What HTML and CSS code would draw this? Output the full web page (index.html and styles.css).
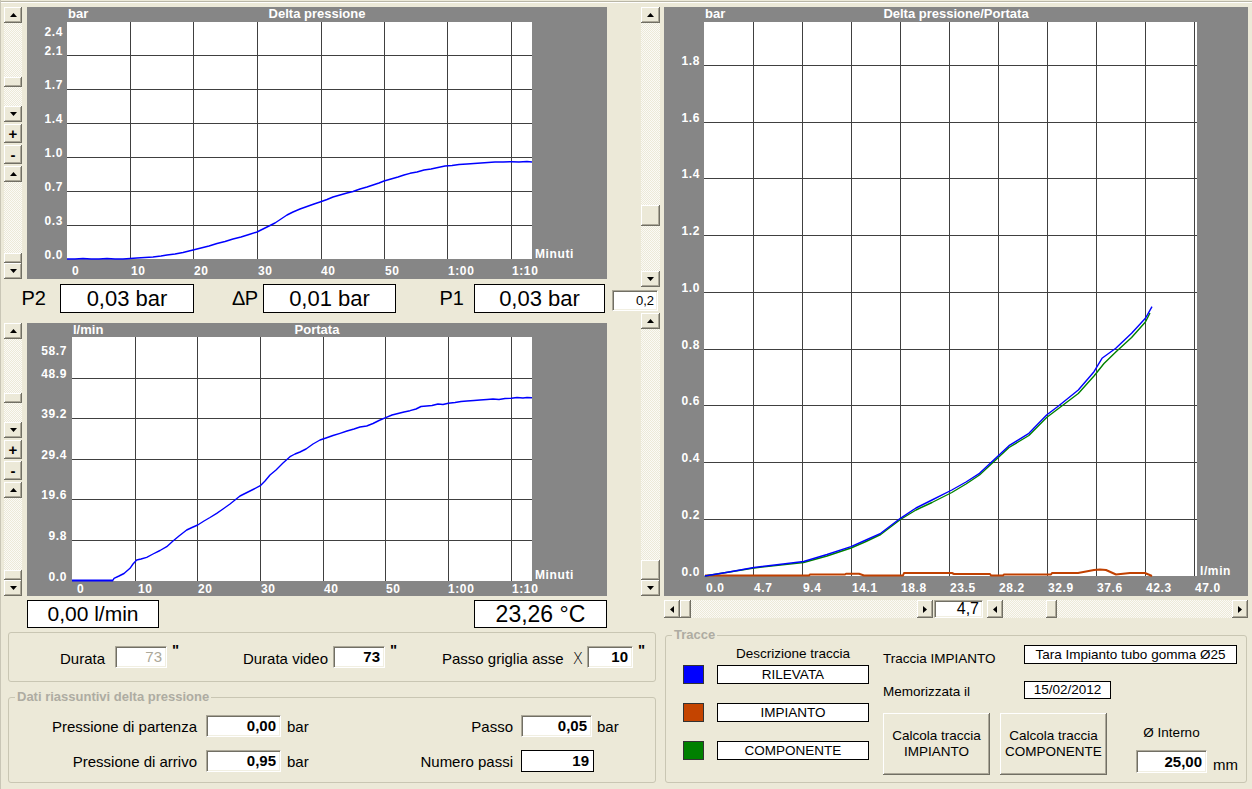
FILE: index.html
```html
<!DOCTYPE html>
<html>
<head>
<meta charset="utf-8">
<title>Delta pressione</title>
<link rel="stylesheet" href="styles.css">
</head>
<body>
<div class="app">
  <div class="top">
    <div class="left">
      <div class="crow c1">
        <div class="zcol">
          <div class="vsb sa">
            <div class="sbtn"><svg class="arr" width="7" height="4"><polygon points="0,4 7,4 3.5,0"/></svg></div>
            <div class="track"><div class="thumb ta"></div></div>
            <div class="sbtn"><svg class="arr" width="7" height="4"><polygon points="0,0 7,0 3.5,4"/></svg></div>
          </div>
          <div class="pm">+</div>
          <div class="pm">-</div>
          <div class="vsb sb">
            <div class="sbtn"><svg class="arr" width="7" height="4"><polygon points="0,4 7,4 3.5,0"/></svg></div>
            <div class="track"><div class="thumb tend"></div></div>
            <div class="sbtn"><svg class="arr" width="7" height="4"><polygon points="0,0 7,0 3.5,4"/></svg></div>
          </div>
        </div>
        <svg class="chart" width="580" height="272" viewBox="0 0 580 272">
          <rect class="cbg" width="580" height="272"/>
          <rect class="plot" x="40" y="15" width="465" height="237"/>
          <path class="grid" d="M103.5 15V252M166.5 15V252M230.5 15V252M294.5 15V252M357.5 15V252M420.5 15V252M484.5 15V252M40 48.5H505M40 82.5H505M40 116.5H505M40 150.5H505M40 184.5H505M40 218.5H505"/>
          <text class="ct" x="41" y="11">bar</text>
          <text class="ct mid" x="290" y="11">Delta pressione</text>
          <g class="ax end">
            <text x="36" y="29">2.4</text>
            <text x="36" y="48">2.1</text>
            <text x="36" y="82">1.7</text>
            <text x="36" y="116">1.4</text>
            <text x="36" y="150">1.0</text>
            <text x="36" y="184">0.7</text>
            <text x="36" y="218">0.3</text>
            <text x="36" y="252">0.0</text>
          </g>
          <g class="ax">
            <text x="45" y="268">0</text>
            <text x="104" y="268">10</text>
            <text x="167" y="268">20</text>
            <text x="231" y="268">30</text>
            <text x="294" y="268">40</text>
            <text x="358" y="268">50</text>
            <text x="421" y="268">1:00</text>
            <text x="485" y="268">1:10</text>
            <text x="508" y="251">Minuti</text>
          </g>
          <polyline class="lb" points="40,252 48,252 56,251.5 64,252 72,252 80,251.5 88,252 96,252 103,251.5 110,251 118,250.5 126,250 134,249 140,248 148,247 156,245.5 166,243 174,241 182,239 190,236.5 198,234.5 206,232 214,230 222,227.5 230,225 236,222 242,219 248,216 254,212 260,208 266,205 273,202 280,199.5 287,197 293,195 300,192.5 306,190 313,188 320,186 326,184.5 333,182 340,180 346,178 352,176 357,174 364,172 371,170 377,168 383,166.3 390,165 397,163 404,162 411,160.5 418,159 425,158.5 432,157.5 440,157 447,156.5 454,156 461,155.5 468,155 476,155 484,154.7 492,155 500,154.5 505,155"/>
        </svg>
      </div>

      <div class="readings">
        <span class="rl rl1">P2</span>
        <div class="vbox w134">0,03 bar</div>
        <span class="rl rl2">∆P</span>
        <div class="vbox w133">0,01 bar</div>
        <span class="rl rl3">P1</span>
        <div class="vbox w131">0,03 bar</div>
      </div>

      <div class="crow c2">
        <div class="zcol">
          <div class="vsb sa">
            <div class="sbtn"><svg class="arr" width="7" height="4"><polygon points="0,4 7,4 3.5,0"/></svg></div>
            <div class="track"><div class="thumb ta"></div></div>
            <div class="sbtn"><svg class="arr" width="7" height="4"><polygon points="0,0 7,0 3.5,4"/></svg></div>
          </div>
          <div class="pm">+</div>
          <div class="pm">-</div>
          <div class="vsb sb">
            <div class="sbtn"><svg class="arr" width="7" height="4"><polygon points="0,4 7,4 3.5,0"/></svg></div>
            <div class="track"><div class="thumb tend"></div></div>
            <div class="sbtn"><svg class="arr" width="7" height="4"><polygon points="0,0 7,0 3.5,4"/></svg></div>
          </div>
        </div>
        <svg class="chart" width="580" height="273" viewBox="0 0 580 273">
          <rect class="cbg" width="580" height="273"/>
          <rect class="plot" x="45" y="14" width="460" height="244"/>
          <path class="grid" d="M108.5 14V258M170.5 14V258M233.5 14V258M296.5 14V258M358.5 14V258M421.5 14V258M484.5 14V258M45 55.5H505M45 95.5H505M45 136.5H505M45 176.5H505M45 217.5H505"/>
          <text class="ct" x="46" y="11">l/min</text>
          <text class="ct mid" x="290" y="11">Portata</text>
          <g class="ax end">
            <text x="40" y="32">58.7</text>
            <text x="40" y="55">48.9</text>
            <text x="40" y="95">39.2</text>
            <text x="40" y="136">29.4</text>
            <text x="40" y="176">19.6</text>
            <text x="40" y="217">9.8</text>
            <text x="40" y="258">0.0</text>
          </g>
          <g class="ax">
            <text x="50" y="270">0</text>
            <text x="111" y="270">10</text>
            <text x="171" y="270">20</text>
            <text x="234" y="270">30</text>
            <text x="297" y="270">40</text>
            <text x="359" y="270">50</text>
            <text x="421" y="270">1:00</text>
            <text x="485" y="270">1:10</text>
            <text x="508" y="256">Minuti</text>
          </g>
          <polyline class="lb thick" points="45,257.5 86,257.5"/>
          <polyline class="lb" points="86,257.5 87,255.3 92,253 97,250.5 103,245.3 106,241 109.7,237 114,236 119.7,234.3 126,231 133,227.5 139.7,223.7 146,218 152,213 159.7,207 165,204.5 170.7,202 177,198 183,194.5 189.7,190.3 196,186 203,181 208,177 213,173 219,170 226,166.5 233.3,162.7 238,158 243,152 249,147 256,140 263,133.7 268,131 273,129 279,126 286,121 293,117 299,115 306,112.5 313,110.3 320,108 327,106 333,104 339.7,103 346,100.5 352,97.5 358.7,94.7 365,92 371,90.5 377,89 383,87.7 389,86 394,83.5 399.7,83 405,82.5 411,81 416,81.5 421.3,80.3 428,79.5 434,78.5 440,78 447,77.5 453,77 460,76.5 466,76 472,76.5 478,75.5 484.3,75.3 490,74.5 496,75 500,74.5 505,74.7"/>
        </svg>
      </div>

      <div class="readings2">
        <div class="vbox w132">0,00 l/min</div>
        <div class="vbox w133 temp">23,26 °C</div>
      </div>
    </div>

    <div class="right">
      <div class="rmain">
        <div class="vcol">
          <div class="vsb s1">
            <div class="sbtn"><svg class="arr" width="7" height="4"><polygon points="0,4 7,4 3.5,0"/></svg></div>
            <div class="track"><div class="thumb tr1"></div></div>
            <div class="sbtn"><svg class="arr" width="7" height="4"><polygon points="0,0 7,0 3.5,4"/></svg></div>
          </div>
          <div class="edit small">0,2</div>
          <div class="vsb s2">
            <div class="sbtn"><svg class="arr" width="7" height="4"><polygon points="0,4 7,4 3.5,0"/></svg></div>
            <div class="track"><div class="thumb tend tr2"></div></div>
            <div class="sbtn"><svg class="arr" width="7" height="4"><polygon points="0,0 7,0 3.5,4"/></svg></div>
          </div>
        </div>
        <svg class="chart" width="584" height="589" viewBox="0 0 584 589">
          <rect class="cbg" width="584" height="589"/>
          <rect class="plot" x="40" y="15" width="493" height="554"/>
          <path class="grid" d="M89.5 15V569M138.5 15V569M187.5 15V569M236.5 15V569M285.5 15V569M334.5 15V569M383.5 15V569M432.5 15V569M481.5 15V569M530.5 15V569M40 58.5H533M40 115.5H533M40 171.5H533M40 228.5H533M40 285.5H533M40 342.5H533M40 398.5H533M40 455.5H533M40 512.5H533"/>
          <text class="ct" x="41" y="11">bar</text>
          <text class="ct mid" x="292" y="11">Delta pressione/Portata</text>
          <g class="ax end">
            <text x="36" y="58">1.8</text>
            <text x="36" y="115">1.6</text>
            <text x="36" y="171">1.4</text>
            <text x="36" y="228">1.2</text>
            <text x="36" y="285">1.0</text>
            <text x="36" y="342">0.8</text>
            <text x="36" y="398">0.6</text>
            <text x="36" y="455">0.4</text>
            <text x="36" y="512">0.2</text>
            <text x="36" y="569">0.0</text>
          </g>
          <g class="ax">
            <text x="42" y="585">0.0</text>
            <text x="90" y="585">4.7</text>
            <text x="139" y="585">9.4</text>
            <text x="188" y="585">14.1</text>
            <text x="237" y="585">18.8</text>
            <text x="286" y="585">23.5</text>
            <text x="335" y="585">28.2</text>
            <text x="384" y="585">32.9</text>
            <text x="433" y="585">37.6</text>
            <text x="482" y="585">42.3</text>
            <text x="531" y="585">47.0</text>
            <text x="536" y="568">l/min</text>
          </g>
          <polyline class="lo" points="41,568.5 145,568.5 146,567.5 181,567.5 182,566.8 195,566.8 200,568.5 239,568.5 240,566 288,566 290,567 326,567 327,568.5 339,568.5 340,567.5 387,567.5 388,566 414,566 422,564.5 430,563 436,562.5 442,563 452,567.5 466,566 481,566 488,569"/>
          <polyline class="lg" points="40.8,569 90,561 139.6,555.5 163,549 187,541 202,534.5 216.7,527.5 236.4,512.5 252,503 268,495.5 287.8,485.5 302,477 315.5,468 333.2,451.5 345,440.5 364.9,428.5 382.6,410.5 394.5,401.5 414.3,386.5 430,369 440,356.5 451.8,345 467.6,330.5 481.4,315 486,306"/>
          <polyline class="lb" points="40.8,569 65,565 90,560.5 115,557.5 139.6,554.5 163,547.5 187,539.7 202,533 216.7,526.3 236.4,511.3 252,501 268,493 287.8,483 302,475 315.5,466.3 333.2,449.7 345,438.7 364.9,426.3 382.6,408 394.5,399 414.3,383 430,364.7 438,351.3 451.8,341.3 467.6,326.3 481.4,311.3 488,299.7"/>
        </svg>
      </div>
      <div class="hs">
        <div class="hsb h1">
          <div class="sbtn"><svg class="arr" width="4" height="7"><polygon points="4,0 4,7 0,3.5"/></svg></div>
          <div class="htrack"><div class="hthumb"></div></div>
          <div class="sbtn"><svg class="arr" width="4" height="7"><polygon points="0,0 0,7 4,3.5"/></svg></div>
        </div>
        <div class="edit hval">4,7</div>
        <div class="hsb h2">
          <div class="sbtn"><svg class="arr" width="4" height="7"><polygon points="4,0 4,7 0,3.5"/></svg></div>
          <div class="htrack"><div class="hthumb h2t"></div></div>
          <div class="sbtn"><svg class="arr" width="4" height="7"><polygon points="0,0 0,7 4,3.5"/></svg></div>
        </div>
      </div>
    </div>
  </div>

  <div class="bottom">
    <div class="bleft">
      <div class="grp g1">
        <span class="glbl gl1">Durata</span>
        <div class="edit gbox dis">73</div>
        <span class="q">"</span>
        <span class="glbl gl2">Durata video</span>
        <div class="edit gbox">73</div>
        <span class="q">"</span>
        <span class="glbl gl3">Passo griglia asse<span class="xs">X</span></span>
        <div class="edit gbox w46">10</div>
        <span class="q">"</span>
      </div>
      <fieldset class="grp g2">
        <legend>Dati riassuntivi delta pressione</legend>
        <div class="prow r1">
          <span class="plbl">Pressione di partenza</span>
          <div class="edit pbox">0,00</div>
          <span class="unit">bar</span>
          <span class="plbl2">Passo</span>
          <div class="edit pbox w71">0,05</div>
          <span class="unit2">bar</span>
        </div>
        <div class="prow r2">
          <span class="plbl">Pressione di arrivo</span>
          <div class="edit pbox">0,95</div>
          <span class="unit">bar</span>
          <span class="plbl2">Numero passi</span>
          <div class="nbox">19</div>
        </div>
      </fieldset>
    </div>

    <fieldset class="grp tracce">
      <legend>Tracce</legend>
      <div class="trbody">
        <div class="colA">
          <div class="hdr">Descrizione traccia</div>
          <div class="trow"><span class="sq blue"></span><div class="bbox wdesc">RILEVATA</div></div>
          <div class="trow"><span class="sq orange"></span><div class="bbox wdesc">IMPIANTO</div></div>
          <div class="trow"><span class="sq green"></span><div class="bbox wdesc">COMPONENTE</div></div>
        </div>
        <div class="colB">
          <div class="brow b1"><span class="blbl">Traccia IMPIANTO</span><div class="bbox tara">Tara Impianto tubo gomma Ø25</div></div>
          <div class="brow b2"><span class="blbl">Memorizzata il</span><div class="bbox date">15/02/2012</div></div>
          <div class="brow b3">
            <button class="btn">Calcola traccia<br>IMPIANTO</button>
            <button class="btn">Calcola traccia<br>COMPONENTE</button>
            <div class="interno">
              <div class="ilbl">Ø Interno</div>
              <div class="irow"><div class="edit ibox">25,00</div><span class="mm">mm</span></div>
            </div>
          </div>
        </div>
      </div>
    </fieldset>
  </div>
</div>
</body>
</html>
```

FILE: styles.css
```css
* { box-sizing: border-box; }
html, body { margin: 0; padding: 0; }
body {
  background: #ECE9D8;
  font-family: "Liberation Sans", Arial, sans-serif;
  color: #000;
}
fieldset { margin: 0; padding: 0; min-width: 0; }
.app {
  width: 1252px;
  height: 789px;
  overflow: hidden;
  background:
    linear-gradient(90deg, #c9c6b6 0 1px, transparent 1px),
    linear-gradient(#ECE9D8 0 1px, #b9b6a6 1px 2px, #fff 2px 3px, #ECE9D8 3px);
}

/* ---------- top area ---------- */
.top { height: 628px; padding-top: 7px; display: flex; }
.left { width: 641px; padding-left: 4px; display: flex; flex-direction: column; }
.right { width: 611px; display: flex; flex-direction: column; }

.crow { display: flex; gap: 5px; }
.c1 { height: 272px; }
.c2 { height: 273px; margin-top: 10px; }
.chart { display: block; flex: none; }

.zcol { width: 18px; display: flex; flex-direction: column; gap: 2px; }
.vsb { display: flex; flex-direction: column; width: 18px; }
.zcol .sa { height: 115px; }
.zcol .sb { flex: 1; }

.sbtn {
  flex: none;
  width: 18px;
  height: 16px;
  background: #ECE9D8;
  box-shadow: inset -1px -1px #716f64, inset 1px 1px #fff, inset -2px -2px #aca899;
  display: flex;
  align-items: center;
  justify-content: center;
}
.arr { display: block; fill: #000; }
.track {
  flex: 1;
  display: flex;
  flex-direction: column;
  background: repeating-conic-gradient(#fbfaf6 0 25%, #ECE9D8 0 50%) 0 0 / 2px 2px;
}
.thumb {
  flex: none;
  height: 10px;
  background: #ECE9D8;
  box-shadow: inset -1px -1px #716f64, inset 1px 1px #fff, inset -2px -2px #aca899;
}
.ta { margin-top: 54px; }
.tend { margin-top: auto; }

.pm {
  flex: none;
  width: 18px;
  height: 19px;
  background: #ECE9D8;
  box-shadow: inset -1px -1px #716f64, inset 1px 1px #fff, inset -2px -2px #aca899;
  font: bold 15px/19px "Liberation Sans", Arial, sans-serif;
  text-align: center;
}

/* chart svg */
.cbg { fill: #868686; }
.plot { fill: #fff; }
.grid { stroke: #404040; stroke-width: 1; fill: none; }
.ct { font: bold 13px "Liberation Sans", Arial, sans-serif; fill: #fff; }
.mid { text-anchor: middle; }
.ax text { font: bold 12px "Liberation Sans", Arial, sans-serif; fill: #fff; letter-spacing: 0.6px; }
.ax.end text { text-anchor: end; }
.lb { fill: none; stroke: #0000ff; stroke-width: 1.4; stroke-linejoin: round; }
.lb.thick { stroke-width: 2; }
.lg { fill: none; stroke: #008000; stroke-width: 1.4; stroke-linejoin: round; }
.lo { fill: none; stroke: #c04000; stroke-width: 2; stroke-linejoin: round; }

/* readings */
.readings { display: flex; align-items: center; height: 29px; margin-top: 5px; }
.rl { font-size: 20px; text-align: right; flex: none; }
.rl1 { width: 42px; margin-right: 14px; }
.rl2 { width: 64px; margin-right: 5px; }
.rl3 { width: 68px; margin-right: 10px; }
.vbox {
  flex: none;
  height: 29px;
  background: #fff;
  border: 1px solid #000;
  font-size: 22px;
  line-height: 27px;
  text-align: center;
}
.w134 { width: 134px; }
.w133 { width: 133px; }
.w132 { width: 132px; }
.w131 { width: 131px; }
.readings2 {
  display: flex;
  justify-content: space-between;
  margin-top: 4px;
  height: 28px;
  padding: 0 34px 0 23px;
}
.readings2 .vbox { height: 28px; line-height: 26px; font-size: 21px; }
.readings2 .temp { font-size: 23px; }

/* right */
.rmain { display: flex; gap: 4px; height: 589px; }
.vcol { width: 19px; display: flex; flex-direction: column; }
.vcol .vsb { width: 19px; }
.vcol .sbtn { width: 19px; }
.s1 { height: 280px; }
.s2 { flex: 1; margin-top: 2px; }
.tr1 { margin-top: 182px; height: 21px; }
.tr2 { height: 20px; }

.edit {
  background: #fff;
  border: 1px solid;
  border-color: #aca899 #fff #fff #aca899;
  box-shadow: inset 1px 1px #716f64, inset -1px -1px #f1efe2;
  text-align: right;
  padding-right: 4px;
  font-weight: bold;
}
.small {
  flex: none;
  width: 46px;
  height: 21px;
  margin: 3px 0 0 -29px;
  font: 13px/19px "Liberation Sans", Arial, sans-serif;
  padding-right: 3px;
}

.hs { display: flex; margin-top: 4px; padding-left: 23px; height: 18px; }
.hsb { display: flex; height: 18px; }
.hsb .sbtn { width: 16px; height: 18px; }
.h1 { width: 269px; }
.h2 { width: 261px; margin-left: 4px; }
.htrack {
  flex: 1;
  display: flex;
  background: repeating-conic-gradient(#fbfaf6 0 25%, #ECE9D8 0 50%) 0 0 / 2px 2px;
}
.hthumb {
  flex: none;
  width: 11px;
  height: 18px;
  background: #ECE9D8;
  box-shadow: inset -1px -1px #716f64, inset 1px 1px #fff, inset -2px -2px #aca899;
}
.h2t { margin-left: 43px; }
.hval {
  flex: none;
  width: 49px;
  height: 18px;
  margin-left: 1px;
  font: 16px/16px "Liberation Sans", Arial, sans-serif;
  padding-right: 3px;
}

/* ---------- bottom ---------- */
.bottom { display: flex; align-items: flex-start; }
.bleft { width: 648px; margin-left: 8px; display: flex; flex-direction: column; }
.grp { border: 1px solid #c9c6b3; border-radius: 3px; }
.grp legend {
  padding: 0 2px;
  margin-left: 6px;
  font: bold 13px/14px "Liberation Sans", Arial, sans-serif;
  color: #aeaca2;
}

.g1 {
  margin-top: 4px;
  height: 50px;
  display: flex;
  align-items: center;
  font-size: 15px;
}
.glbl { flex: none; text-align: right; padding-top: 3px; }
.gl1 { width: 96px; margin-right: 10px; }
.gl2 { width: 146px; margin-right: 5px; }
.gl3 { width: 183px; margin-right: 4px; }
.xs { margin-left: 9px; font-family: "DejaVu Sans", sans-serif; font-weight: 200; }
.gbox { flex: none; width: 52px; height: 22px; font-size: 15px; line-height: 20px; }
.gbox.w46 { width: 46px; }
.gbox.dis { color: #aca899; font-weight: normal; }
.q {
  flex: none;
  width: 10px;
  align-self: flex-start;
  margin-top: 10px;
  margin-left: 5px;
  font: bold 15px/14px "Liberation Sans", Arial, sans-serif;
}

.g2 { margin-top: 8px; height: 93px; }
.prow { display: flex; align-items: center; height: 22px; font-size: 15px; }
.prow.r1 { margin-top: 11px; }
.prow.r2 { margin-top: 13px; }
.plbl { flex: none; width: 188px; margin-right: 9px; text-align: right; }
.pbox { flex: none; width: 75px; height: 22px; font-size: 15px; line-height: 20px; }
.pbox.w71 { width: 71px; }
.unit { flex: none; width: 49px; padding-left: 6px; }
.plbl2 { flex: none; width: 183px; margin-right: 8px; text-align: right; }
.unit2 { padding-left: 5px; }
.nbox {
  flex: none;
  width: 73px;
  height: 22px;
  background: #fff;
  border: 1px solid #000;
  text-align: right;
  padding-right: 4px;
  font-weight: bold;
  line-height: 20px;
}

.tracce { margin-left: 9px; width: 582px; height: 155px; }
.trbody { display: flex; font-size: 13.5px; }
.colA { width: 186px; margin-left: 17px; display: flex; flex-direction: column; }
.hdr { margin: 4px 0 0 34px; width: 152px; text-align: center; line-height: 15px; }
.trow { display: flex; gap: 13px; height: 19px; margin-top: 19px; }
.hdr + .trow { margin-top: 4px; }
.sq { flex: none; width: 21px; height: 19px; border: 1px solid #333; }
.sq.blue { background: #0000ff; }
.sq.orange { background: #c44400; }
.sq.green { background: #008000; }
.bbox {
  flex: none;
  background: #fff;
  border: 1px solid #000;
  text-align: center;
  line-height: 17px;
}
.wdesc { width: 152px; }
.colB { margin-left: 14px; display: flex; flex-direction: column; }
.brow { display: flex; align-items: flex-end; }
.blbl { flex: none; width: 141px; line-height: 15px; }
.b1 { margin-top: 3px; height: 19px; }
.b1 .blbl { margin-bottom: -2px; }
.tara { width: 213px; height: 19px; }
.b2 { margin-top: 17px; height: 18px; }
.date { width: 87px; height: 18px; line-height: 16px; }
.b3 { margin-top: 14px; align-items: flex-start; }
.btn {
  flex: none;
  width: 107px;
  height: 62px;
  margin: 0 10px 0 0;
  padding: 0;
  background: #ECE9D8;
  border: none;
  box-shadow: inset -1px -1px #716f64, inset 1px 1px #fff, inset -2px -2px #aca899;
  font: 13.5px/16px "Liberation Sans", Arial, sans-serif;
  color: #000;
}
.interno { margin-left: 19px; display: flex; flex-direction: column; }
.ilbl { margin-top: 12px; width: 71px; text-align: center; line-height: 15px; }
.irow { display: flex; align-items: flex-end; margin-top: 10px; }
.ibox { width: 71px; height: 23px; font-size: 15px; line-height: 21px; }
.mm { margin-left: 6px; font-size: 15px; }
```
